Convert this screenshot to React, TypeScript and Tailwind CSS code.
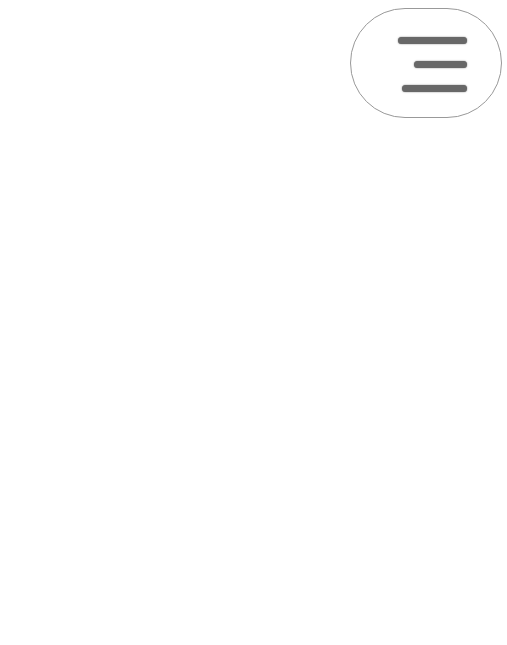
// Menu toggle button, top right of an otherwise empty page
const App = () => {
  return (
    <div className="min-h-[645px] w-full bg-white">
      <div className="flex justify-end pt-2 pr-[5px]">
        <button
          type="button"
          aria-label="Open menu"
          className="flex h-[110px] w-[152px] flex-col items-end justify-center gap-[17px] rounded-full border-[1.5px] border-[#999] bg-white pt-[2px] pr-[34px]"
        >
          <span className="h-[7px] w-[69px] rounded-full bg-[#686868] shadow-[0_0_1.5px_#666]" />
          <span className="h-[7px] w-[53px] rounded-full bg-[#686868] shadow-[0_0_1.5px_#666]" />
          <span className="h-[7px] w-[65px] rounded-full bg-[#686868] shadow-[0_0_1.5px_#666]" />
        </button>
      </div>
    </div>
  );
};

export default App;
